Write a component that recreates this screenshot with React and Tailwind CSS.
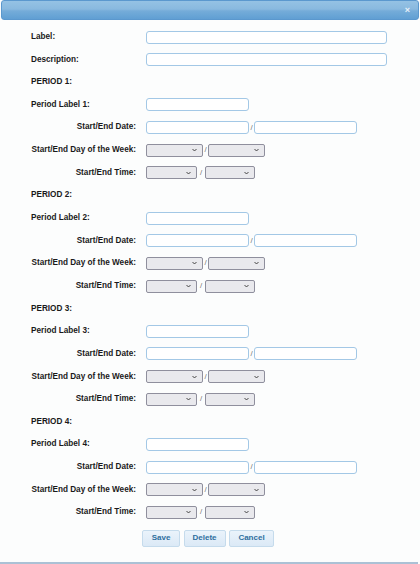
import React from "react";

const font = { fontFamily: '"Liberation Sans", Arial, sans-serif' };

function TextBox({ w }) {
  return (
    <div
      className={`h-[13px] border border-[#a3c8e6] rounded-[3px] bg-white ${w}`}
    />
  );
}

function Select({ w }) {
  return (
    <div
      className={`h-[13px] border border-[#8f8f9d] rounded-[2px] bg-[#e9e9ed] flex items-center justify-end pr-[5px] ${w}`}
    >
      <svg width="5" height="4" viewBox="0 0 5 4">
        <path d="M0.5 1 L2.5 3 L4.5 1" fill="none" stroke="#333" strokeWidth="0.9" />
      </svg>
    </div>
  );
}

function Slash({ cls }) {
  return <span className={`text-[8px] text-[#777] leading-none ${cls}`}>/</span>;
}

function Row({ label, right, children }) {
  return (
    <div className="h-[22.65px] flex items-center">
      <div
        className={`w-[105px] shrink-0 text-[8.2px] font-bold text-[#1a1a1a] leading-none whitespace-nowrap ${
          right ? "text-right" : "text-left"
        }`}
      >
        {label}
      </div>
      <div className="ml-[10px] flex items-center">{children}</div>
    </div>
  );
}

function Period({ n }) {
  return (
    <>
      <Row label={`PERIOD ${n}:`} />
      <Row label={`Period Label ${n}:`}>
        <TextBox w="w-[103px]" />
      </Row>
      <Row label="Start/End Date:" right>
        <TextBox w="w-[103px]" />
        <Slash cls="mx-[1.5px]" />
        <TextBox w="w-[103px]" />
      </Row>
      <Row label="Start/End Day of the Week:" right>
        <Select w="w-[57px]" />
        <Slash cls="mx-[1.5px]" />
        <Select w="w-[57px]" />
      </Row>
      <Row label="Start/End Time:" right>
        <Select w="w-[51px]" />
        <Slash cls="mx-[3px]" />
        <Select w="w-[50px]" />
      </Row>
    </>
  );
}

function Btn({ children, w }) {
  return (
    <div
      className={`h-[17px] ${w} flex items-center justify-center border border-[#c5dbec] rounded-[2px] bg-[linear-gradient(to_bottom,#eaf3fb,#dbe9f6)] text-[8px] font-bold text-[#2e6e9e] leading-none`}
    >
      {children}
    </div>
  );
}

export default function App() {
  return (
    <div
      style={font}
      className="w-[420px] h-[564px] bg-[#fcfdfd] flex flex-col overflow-hidden"
    >
      <div className="mx-[1px] mt-0 h-[20px] shrink-0 rounded-[3px] border border-[#5b98ce] bg-[linear-gradient(to_bottom,#95c2e4_0%,#89b9df_45%,#75acd9_55%,#609fd3_100%)] flex items-center justify-end pr-[8px]">
        <span className="text-[9px] font-bold text-[#e8f1f9] leading-none">×</span>
      </div>
      <div className="pl-[31px] pt-[5.7px] flex flex-col">
        <Row label="Label:">
          <TextBox w="w-[241px]" />
        </Row>
        <Row label="Description:">
          <TextBox w="w-[241px]" />
        </Row>
        {[1, 2, 3, 4].map((n) => (
          <Period key={n} n={n} />
        ))}
      </div>
      <div className="mt-[6px] flex gap-[3.5px] ml-[142px] w-max">
        <Btn w="w-[38px]">Save</Btn>
        <Btn w="w-[42px]">Delete</Btn>
        <Btn w="w-[45px]">Cancel</Btn>
      </div>
      <div className="flex-1" />
      <div className="h-[2px] w-[418px] bg-[#abc1d5]" />
    </div>
  );
}
